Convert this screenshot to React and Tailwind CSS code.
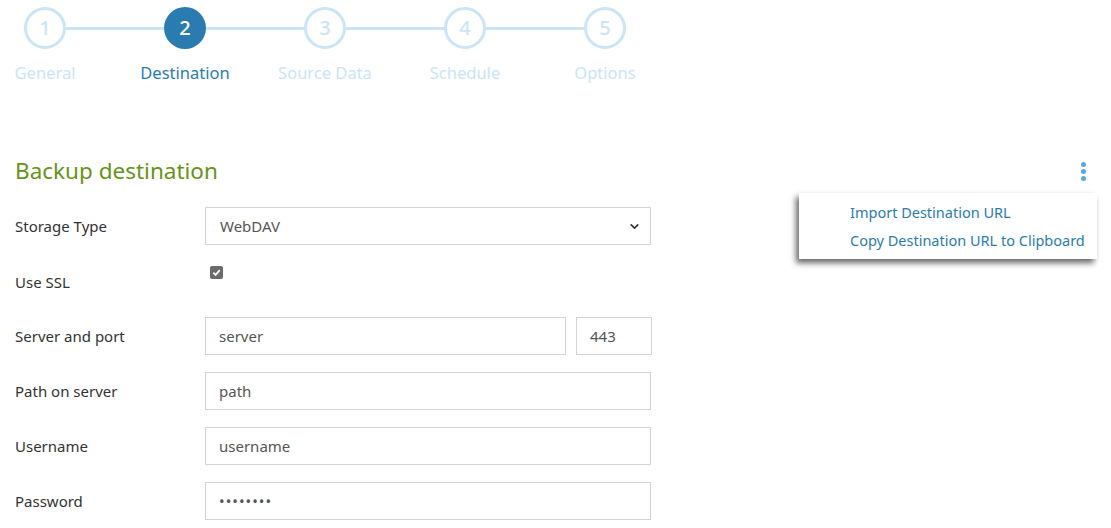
import { ChevronDown } from 'lucide-react';

const STEPS = ['General', 'Destination', 'Source Data', 'Schedule', 'Options'];

function Stepper({ active }) {
  return (
    <div className="pt-[7px]">
      <div className="flex items-center pl-[24px]">
        {STEPS.map((s, i) => (
          <div key={s} className="flex items-center">
            <div
              className={
                i === active
                  ? 'w-[42px] h-[42px] rounded-full bg-[#2a7cb0] text-white flex items-center justify-center text-[20px] font-medium'
                  : 'w-[42px] h-[42px] rounded-full border-[3px] border-[#c9e5f7] text-[#c9e5f7] flex items-center justify-center text-[20px] font-medium'
              }
            >
              {i + 1}
            </div>
            {i < STEPS.length - 1 && <div className="w-[98px] h-[3px] bg-[#c9e5f7]" />}
          </div>
        ))}
      </div>
      <div className="flex ml-[-25px] mt-[13px]">
        {STEPS.map((s, i) => (
          <div key={s} className={'w-[140px] text-center text-[16.5px] leading-[22px] ' + (i === active ? 'text-[#2a7cb0]' : 'text-[#c9e5f7]')}>
            {s}
          </div>
        ))}
      </div>
    </div>
  );
}

function Row({ label, children }) {
  return (
    <div className="flex items-center">
      <div className="w-[190px] text-[15px] text-[#333]">{label}</div>
      {children}
    </div>
  );
}

const inputCls = 'h-[38px] border border-[#d4d4d4] bg-white px-[13px] text-[15px] text-[#555] flex items-center';

export default function App() {
  return (
    <div className="relative w-full h-[528px] bg-white overflow-hidden" style={{ fontFamily: '"Noto Sans", "Open Sans", sans-serif' }}>
      <Stepper active={1} />

      <div className="px-[15px] mt-[72px]">
        <div className="flex items-center justify-between">
          <h2 className="text-[22.5px] leading-[30px] text-[#67931a]">Backup destination</h2>
          <div className="flex flex-col gap-[2px] mr-[10px]">
            <span className="w-[5px] h-[5px] rounded-full bg-[#5aa8dc]" />
            <span className="w-[5px] h-[5px] rounded-full bg-[#5aa8dc]" />
            <span className="w-[5px] h-[5px] rounded-full bg-[#5aa8dc]" />
          </div>
        </div>

        <div className="mt-[21px] flex flex-col gap-[17px]">
          <Row label="Storage Type">
            <div className={inputCls + ' w-[446px] justify-between'}>
              <span className="pl-[1px]">WebDAV</span>
              <ChevronDown size={13} strokeWidth={3} className="text-[#333] mr-[-4px]" />
            </div>
          </Row>
          <div className="flex h-[38px]">
            <div className="w-[190px] text-[15px] text-[#333] pt-[9px]">Use SSL</div>
            <div className="pt-[4px] pl-[5px]">
              <div className="w-[13px] h-[13px] rounded-[2px] bg-[#6b6b6b] flex items-center justify-center">
                <svg width="9" height="9" viewBox="0 0 10 10">
                  <path d="M1.5 5.2 L4 7.6 L8.6 2.4" fill="none" stroke="white" strokeWidth="2" />
                </svg>
              </div>
            </div>
          </div>
          <Row label="Server and port">
            <div className="flex gap-[10px]">
              <div className={inputCls + ' w-[361px]'}>server</div>
              <div className={inputCls + ' w-[76px]'}>443</div>
            </div>
          </Row>
          <Row label="Path on server">
            <div className={inputCls + ' w-[446px]'}>path</div>
          </Row>
          <Row label="Username">
            <div className={inputCls + ' w-[446px]'}>username</div>
          </Row>
          <Row label="Password">
            <div className={inputCls + ' w-[446px] tracking-[1px] text-[12px]'}>••••••••</div>
          </Row>
        </div>
      </div>

      <div className="absolute left-[799px] top-[193px] w-[298px] h-[66px] bg-white shadow-[-3px_4px_6px_rgba(0,0,0,0.6)] flex flex-col justify-center pl-[51px] gap-[9px]">
        <div className="text-[14.5px] leading-[19px] text-[#2a7cb0]">Import Destination URL</div>
        <div className="text-[14.5px] leading-[19px] text-[#2a7cb0]">Copy Destination URL to Clipboard</div>
      </div>
    </div>
  );
}
